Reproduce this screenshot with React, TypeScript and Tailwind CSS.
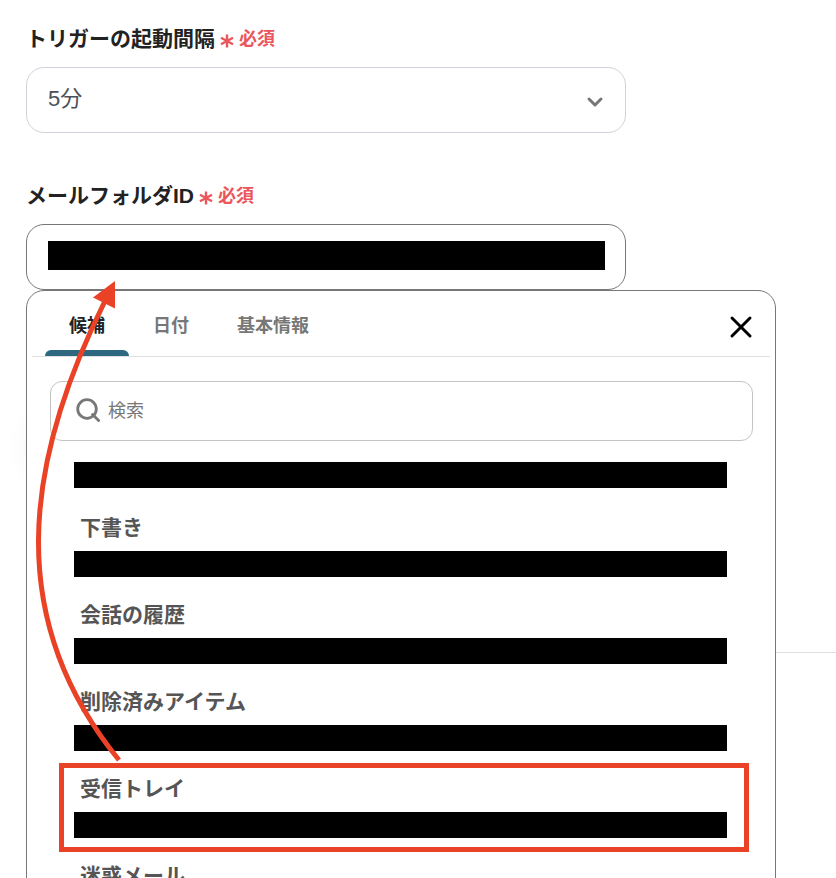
import React, { useState } from 'react';
import { ChevronDown, X } from 'lucide-react';

interface Folder {
  name: string;
  highlighted?: boolean;
}

const TABS = ['候補', '日付', '基本情報'];

const FOLDERS: Folder[] = [
  { name: '下書き' },
  { name: '会話の履歴' },
  { name: '削除済みアイテム' },
  { name: '受信トレイ', highlighted: true },
  { name: '迷惑メール' },
];

const FieldLabel: React.FC<{ htmlFor: string; children: React.ReactNode }> = ({ htmlFor, children }) => (
  <label htmlFor={htmlFor} className="mb-3 flex h-8 items-center text-[21px] leading-8 font-bold text-[#222]">
    {children}
    <svg viewBox="0 0 14 14" className="mt-1 ml-[5px] size-3.5" fill="none" stroke="#ea565c" strokeWidth="2.4" aria-hidden="true">
      <path d="M7 0.5v13M1 3.8l12 6.4M13 3.8L1 10.2" />
    </svg>
    <span className="ml-[5px] text-lg leading-8 text-[#ea565c]">必須</span>
  </label>
);

const Redacted: React.FC = () => <span className="block h-[26px] w-full bg-black" />;

const SearchIcon: React.FC = () => (
  <svg viewBox="0 0 24 24" className="mb-0.5 size-6 shrink-0" fill="none" stroke="#777" strokeWidth="2.8" strokeLinecap="round" aria-hidden="true">
    <circle cx="11" cy="11" r="9.3" />
    <path d="M16.6 16.6l6 6" />
  </svg>
);

// Points from the highlighted folder up to the input
const GuideArrow: React.FC = () => (
  <svg
    viewBox="32 278 92 488"
    className="pointer-events-none absolute top-[54px] left-[6px] z-20 h-[488px] w-[92px]"
    aria-hidden="true"
  >
    <path d="M119 760C5 620 23 466 105 301" fill="none" stroke="#ea4227" strokeWidth="5" />
    <path d="M115 281L93 297.5L115 308.5Z" fill="#ea4227" />
  </svg>
);

const CandidatePanel: React.FC = () => {
  const [activeTab, setActiveTab] = useState(TABS[0]);

  return (
    <div className="absolute top-full left-0 z-10 w-[750px] max-w-[calc(100vw-52px)] rounded-t-[18px] border border-[#777] bg-white">
      <div className="mx-[5px] flex h-[66px] items-center border-b border-[#e0e0e0] pt-1 pl-[13px]">
        <div role="tablist" className="flex h-full flex-1">
          {TABS.map((tab) => (
            <button
              key={tab}
              role="tab"
              aria-selected={tab === activeTab}
              onClick={() => setActiveTab(tab)}
              className={`relative px-6 text-lg font-bold ${
                tab === activeTab
                  ? 'text-[#222] after:absolute after:inset-x-0 after:bottom-0 after:h-1.5 after:rounded-t-md after:bg-[#2e6880]'
                  : 'text-[#777]'
              }`}
            >
              {tab}
            </button>
          ))}
        </div>
        <button aria-label="閉じる" className="mt-0.5 mr-[11px] text-black">
          <X className="size-9" />
        </button>
      </div>

      <div className="mt-6 mr-[22px] ml-[23px] flex h-[60px] items-center rounded-xl border border-[#c4c4c4] pr-6 pl-[25px]">
        <SearchIcon />
        <input
          type="search"
          aria-label="検索"
          placeholder="検索"
          className="ml-2 h-full min-w-0 flex-1 text-lg outline-none placeholder:text-[#777]"
        />
      </div>

      <ul className="mr-12 ml-[47px] pt-[21px]">
        <li className="pb-[19px]">
          <Redacted />
        </li>
        {FOLDERS.map((folder) => (
          <li key={folder.name} className="relative pb-[17px]">
            <button className="block w-full text-left">
              <span className="mb-0.5 block pl-1.5 text-[21px] leading-[42px] font-bold text-[#555]">{folder.name}</span>
              <Redacted />
            </button>
            {folder.highlighted && (
              <span className="pointer-events-none absolute -top-[5px] -right-[22px] bottom-[3px] -left-[15px] border-5 border-[#ea4227]" />
            )}
          </li>
        ))}
      </ul>
    </div>
  );
};

export default function App() {
  return (
    <main className="h-screen overflow-hidden bg-white pt-[23px] font-['Liberation_Sans','Noto_Sans_CJK_JP',sans-serif]">
      <div className="mx-[26px]">
        <FieldLabel htmlFor="interval">トリガーの起動間隔</FieldLabel>
        <div className="relative max-w-[600px]">
          <select
            id="interval"
            className="h-[66px] w-full appearance-none rounded-[18px] border border-[#d0d3d9] bg-white px-[21px] pb-1 text-[22px] text-[#4b5057] outline-none"
          >
            <option>5分</option>
          </select>
          <ChevronDown className="pointer-events-none absolute top-[23px] right-[19px] size-6 text-[#777]" strokeWidth={3} />
        </div>
      </div>

      <div className="mx-[26px] mt-[47px]">
        <FieldLabel htmlFor="folder-id">メールフォルダID</FieldLabel>
        <div className="relative">
          <div className="flex h-[66px] max-w-[600px] rounded-[18px] border border-[#777] bg-white px-5 pt-4 pl-[21px]">
            <input id="folder-id" type="text" className="h-[29px] w-full bg-black text-[21px] text-black outline-none" />
          </div>
          <CandidatePanel />
          <GuideArrow />
        </div>
      </div>

      <div className="mt-[130px] ml-[30px] size-14 rounded-full shadow-[0_0_30px_rgba(0,0,0,0.07)]" />
      <hr className="mt-44 ml-[26px] border-[#e0e0e0]" />
    </main>
  );
}
